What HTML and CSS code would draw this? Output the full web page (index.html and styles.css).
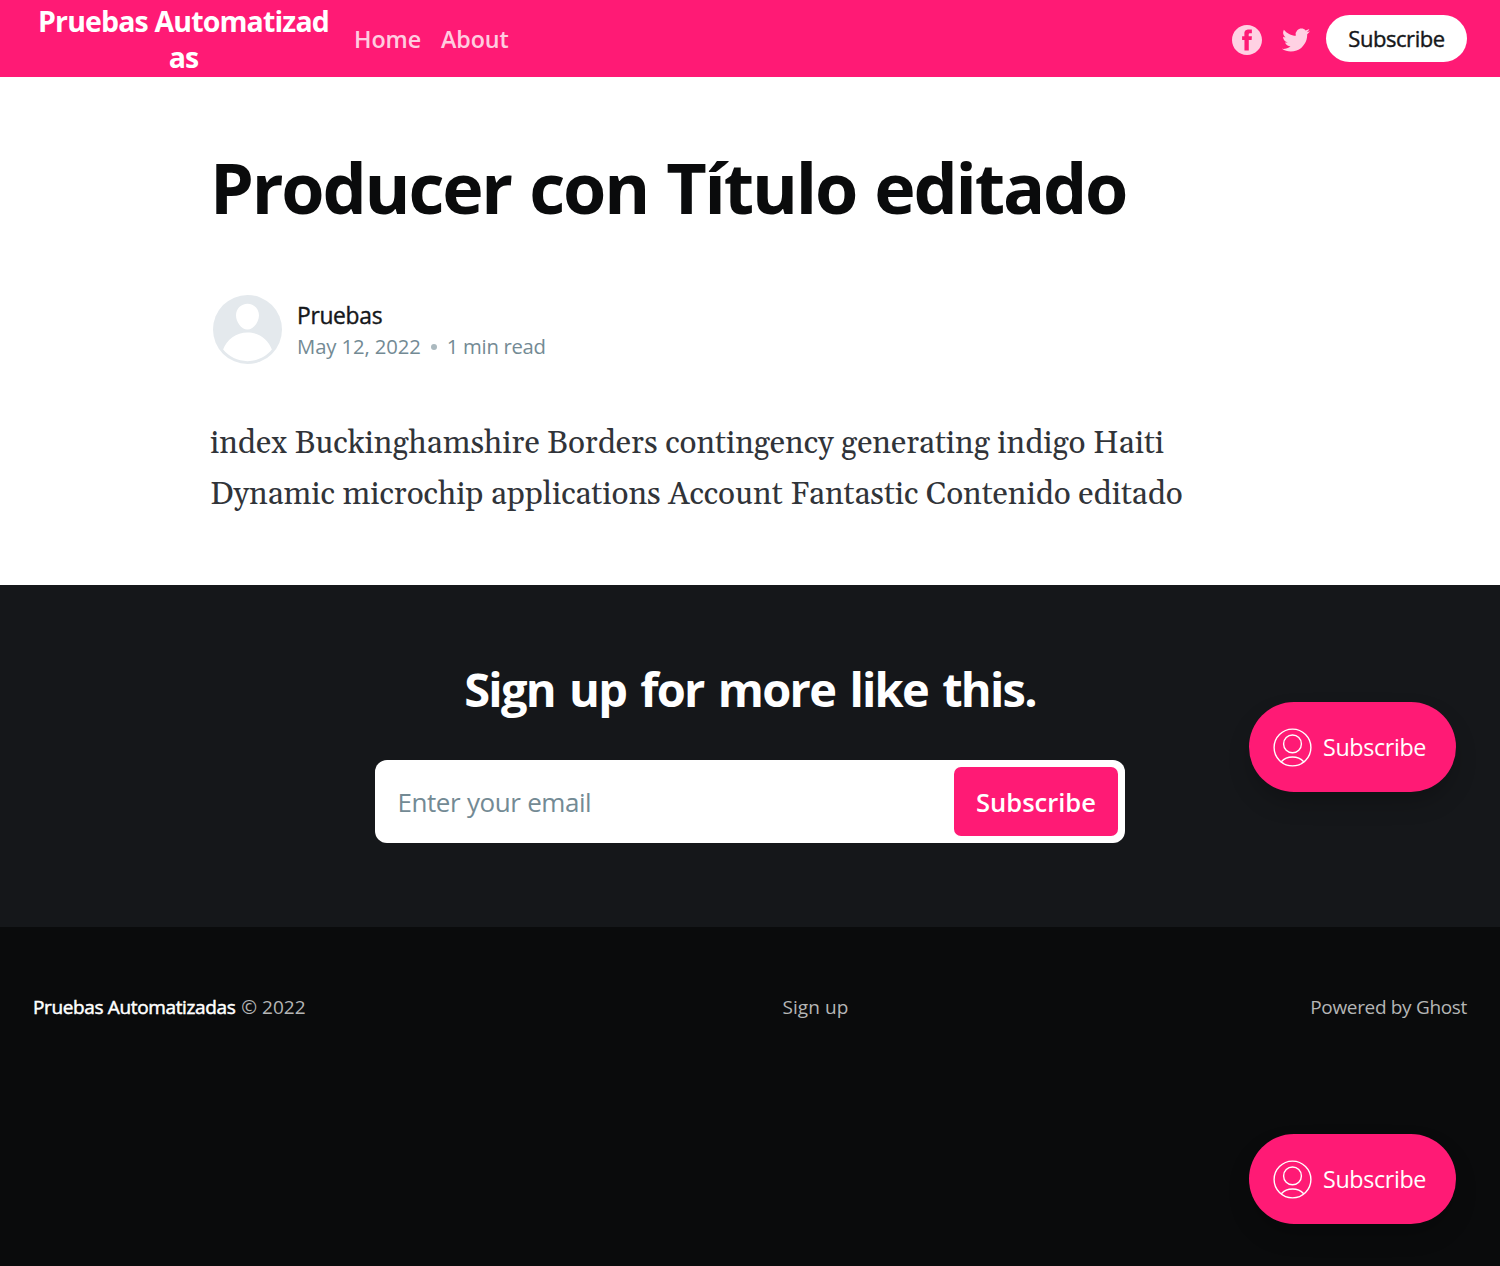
FILE: index.html
```
<!DOCTYPE html>
<html lang="es">
<head>
<meta charset="utf-8">
<title>Producer con Título editado</title>
<link rel="stylesheet" href="styles.css">
</head>
<body>
<svg width="0" height="0" class="defs" aria-hidden="true">
  <symbol id="user" viewBox="0 0 40 40">
    <g fill="none" stroke="currentColor" stroke-width="1.4">
      <circle cx="19.5" cy="20.5" r="18.4"/>
      <circle cx="19.5" cy="16.9" r="8.9"/>
      <path d="M8.3 34.7C11.1 31.6 15.2 30 19.5 30s8.4 1.6 11.2 4.7"/>
    </g>
  </symbol>
</svg>
<header class="head">
  <a class="logo">Pruebas Automatizad<br>as</a>
  <nav class="menu"><a>Home</a><a>About</a></nav>
  <div class="actions">
    <svg class="facebook" viewBox="0 0 32 32"><path d="M16 0c8.837 0 16 7.163 16 16s-7.163 16-16 16S0 24.837 0 16 7.163 0 16 0zm5.204 4.911h-3.546c-2.103 0-4.443.885-4.443 3.934.01 1.062 0 2.08 0 3.225h-2.433v3.872h2.509v11.147h4.61v-11.22h3.042l.275-3.81h-3.397s.007-1.695 0-2.187c0-1.205 1.253-1.136 1.329-1.136h2.054V4.911z"/></svg>
    <svg class="twitter" viewBox="0 0 32 32"><path d="M30.063 7.313c-.813 1.125-1.75 2.125-2.875 2.938v.75c0 1.563-.188 3.125-.688 4.625a15.088 15.088 0 0 1-2.063 4.438c-.875 1.438-2 2.688-3.25 3.813a15.015 15.015 0 0 1-4.625 2.563c-1.813.688-3.75 1-5.75 1-3.25 0-6.188-.875-8.875-2.625.438.063.875.125 1.375.125 2.688 0 5.063-.875 7.188-2.5-1.25 0-2.375-.375-3.375-1.125s-1.688-1.688-2.063-2.875c.438.063.813.125 1.125.125.5 0 1-.063 1.5-.25-1.313-.25-2.438-.938-3.313-1.938a5.673 5.673 0 0 1-1.313-3.688v-.063c.813.438 1.688.688 2.625.688a5.228 5.228 0 0 1-1.875-2c-.5-.875-.688-1.813-.688-2.75 0-1.063.25-2.063.75-2.938 1.438 1.75 3.188 3.188 5.25 4.25s4.313 1.688 6.688 1.813a5.579 5.579 0 0 1 1.5-5.438c1.125-1.125 2.5-1.688 4.125-1.688s3.063.625 4.188 1.813a11.48 11.48 0 0 0 3.688-1.375c-.438 1.375-1.313 2.438-2.563 3.188 1.125-.125 2.188-.438 3.313-.875z"/></svg>
    <a class="head-button">Subscribe</a>
  </div>
</header>
<main class="article">
  <h1 class="title">Producer con Título editado</h1>
  <div class="byline">
    <svg class="avatar" viewBox="0 0 24 24"><circle cx="12" cy="12" r="12" fill="#e4e9ed"/><path fill="#fff" d="M3.513 18.998C4.749 15.504 8.082 13 12 13s7.251 2.504 8.487 5.998C18.47 21.442 15.417 23 12 23s-6.47-1.558-8.487-4.002zM12 12c2.21 0 4-2.79 4-5s-1.79-4-4-4-4 1.79-4 4 1.79 5 4 5z"/></svg>
    <div class="byline-text">
      <div class="author">Pruebas</div>
      <div class="meta"><time>May 12, 2022</time><i class="dot"></i><span class="length">1 min read</span></div>
    </div>
  </div>
  <p class="content">index Buckinghamshire Borders contingency generating indigo Haiti<br>Dynamic microchip applications Account Fantastic Contenido editado</p>
</main>
<section class="signup">
  <h2 class="signup-title">Sign up for more like this.</h2>
  <div class="form"><span class="placeholder">Enter your email</span><a class="form-button">Subscribe</a></div>
</section>
<footer class="foot">
  <div><b class="site">Pruebas Automatizadas</b> <span class="year">© 2022</span></div>
  <a class="foot-link">Sign up</a>
  <a class="ghost">Powered by Ghost</a>
</footer>
<a class="portal portal-upper"><svg class="user"><use href="#user"/></svg>Subscribe</a>
<a class="portal portal-lower"><svg class="user"><use href="#user"/></svg>Subscribe</a>
</body>
</html>
```

FILE: styles.css
```
* { box-sizing: border-box; }
body {
  margin: 0;
  position: relative;
  min-height: 1266px;
  display: flex;
  flex-direction: column;
  background: #fff;
  font-family: "Open Sans", "Noto Sans", sans-serif;
  white-space: nowrap;
}
h1, h2, p { margin: 0; }
.defs { position: absolute; }

.head {
  height: 77px;
  padding: 0 33px 0 36px;
  display: flex;
  align-items: center;
  background: #ff1a75;
  color: #fff;
}
.logo {
  width: 295px;
  padding-top: 1px;
  text-align: center;
  font-size: 28.5px;
  font-weight: 700;
  line-height: 36px;
  letter-spacing: -0.85px;
}
.menu {
  display: flex;
  gap: 20px;
  margin-left: 23px;
  padding-top: 1px;
  font-size: 23.3px;
  font-weight: 600;
  letter-spacing: -0.1px;
  color: rgba(255, 255, 255, .8);
}
.actions { display: flex; align-items: center; margin-left: auto; }
.facebook, .twitter { fill: rgba(255, 255, 255, .8); }
.facebook { width: 30px; height: 30px; margin: 3px 18px 0 0; }
.twitter { width: 32px; height: 32px; margin: 2px 14px 0 0; }
.head-button {
  width: 141px;
  height: 47px;
  border-radius: 24px;
  background: #fff;
  color: #15171a;
  text-align: center;
  font-size: 22px;
  font-weight: 500;
  line-height: 47px;
  letter-spacing: -0.45px;
  -webkit-text-stroke: .4px;
}

.article { height: 508px; padding: 70px 210px 0; }
.title {
  color: #0a0b0c;
  font-size: 70px;
  font-weight: 700;
  line-height: 80px;
  letter-spacing: -2.2px;
  word-spacing: 2.3px;
}
.byline { display: flex; align-items: center; margin: 68px 0 55px; padding-left: 3px; }
.avatar { width: 69px; height: 69px; margin-right: 15px; }
.byline-text { padding-top: 2px; }
.author {
  color: #15171a;
  font-size: 22.8px;
  font-weight: 500;
  line-height: 31px;
  letter-spacing: -0.3px;
  -webkit-text-stroke: .4px;
}
.meta {
  display: flex;
  align-items: center;
  color: #738a94;
  font-size: 20.3px;
  line-height: 31px;
  letter-spacing: -0.1px;
}
.dot { width: 6px; height: 6px; margin: 2px 10px 0; border-radius: 50%; background: #abb9bf; }
.length { letter-spacing: -0.3px; }
.content {
  color: #313439;
  font-family: Gelasio, "Liberation Serif", serif;
  font-size: 31.5px;
  line-height: 51px;
}

.signup {
  height: 342px;
  padding-top: 74px;
  display: flex;
  flex-direction: column;
  align-items: center;
  background: #15171a;
}
.signup-title {
  color: #fff;
  font-size: 47px;
  font-weight: 700;
  line-height: 60px;
  letter-spacing: -1.75px;
  word-spacing: 3.7px;
}
.form {
  width: 750px;
  height: 83px;
  margin-top: 41px;
  padding: 7px 7px 7px 22.5px;
  display: flex;
  align-items: center;
  justify-content: space-between;
  border-radius: 12px;
  background: #fff;
}
.placeholder { color: #738a94; font-size: 26px; letter-spacing: -0.45px; word-spacing: .5px; }
.form-button {
  width: 164px;
  height: 69px;
  border-radius: 7px;
  background: #ff1a75;
  color: #fff;
  text-align: center;
  font-size: 25.5px;
  font-weight: 600;
  line-height: 70px;
}

.foot {
  flex: 1;
  padding: 66px 33px 0;
  display: grid;
  grid-template-columns: 1fr auto 1fr;
  align-items: start;
  background: #0a0b0c;
  color: #b5b6b6;
  font-size: 19px;
  line-height: 28px;
}
.site { color: #fff; font-weight: 500; letter-spacing: -0.36px; -webkit-text-stroke: .5px; }
.year { margin-left: 1px; letter-spacing: 0; }
.foot-link { padding-left: 131px; letter-spacing: 0.1px; }
.ghost { text-align: right; letter-spacing: -0.33px; }

/* Floating membership buttons */
.portal {
  position: absolute;
  right: 44px;
  width: 207px;
  height: 90px;
  padding-left: 24px;
  display: flex;
  align-items: center;
  gap: 10px;
  border-radius: 45px;
  background: #ff1a75;
  box-shadow: 0 12px 24px -4px rgba(0, 0, 0, .25);
  color: #fff;
  font-size: 23.3px;
  letter-spacing: -0.36px;
}
.portal-upper { top: 702px; }
.portal-lower { top: 1134px; }
.user { width: 40px; height: 40px; }
```
